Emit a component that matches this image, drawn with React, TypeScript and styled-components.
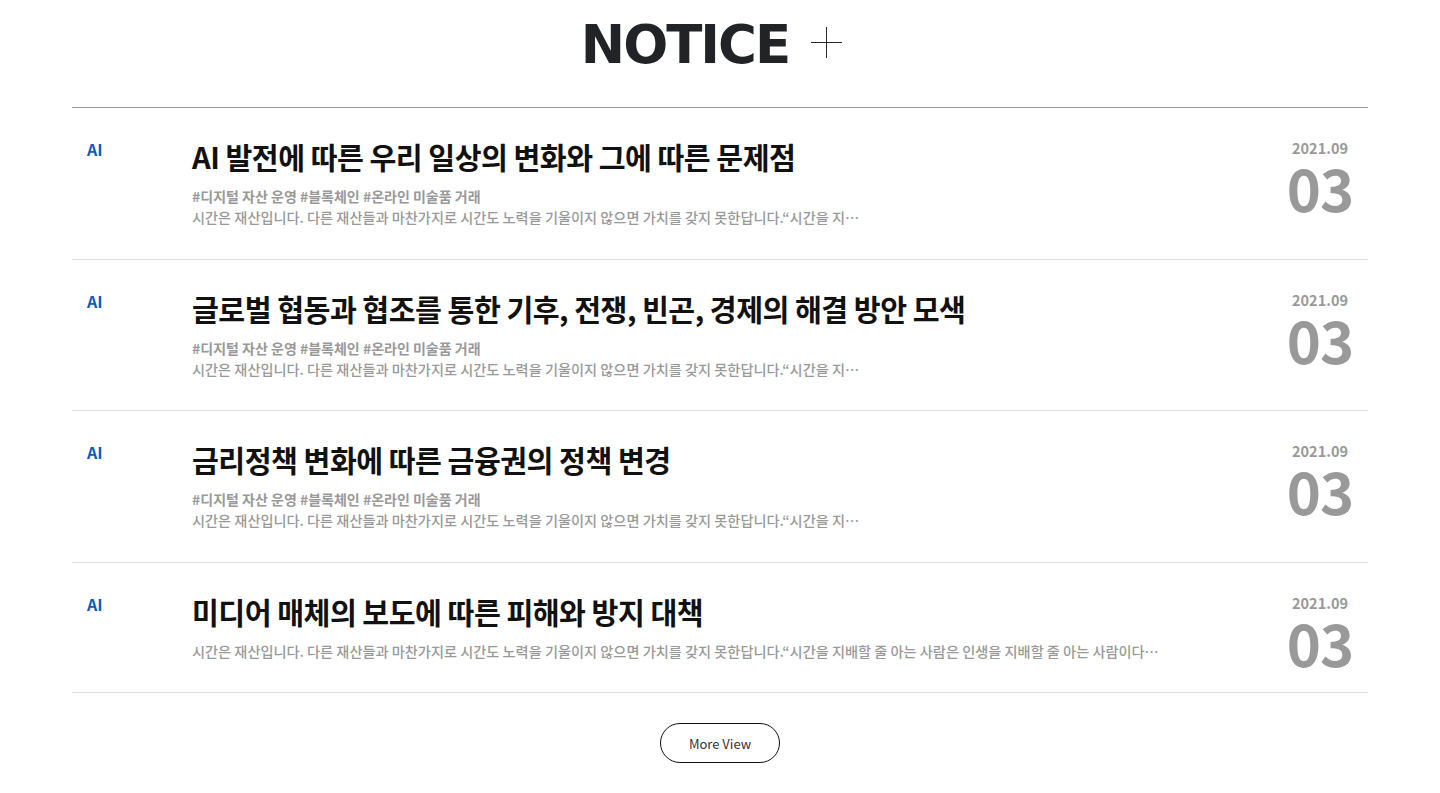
import * as React from 'react';
import styled, { createGlobalStyle } from 'styled-components';

type NoticeItem = {
  id: number;
  category: string;
  title: string;
  tags?: string;
  desc: string;
  descWidth?: number;
  month: string;
  day: string;
};

const DESC = '시간은 재산입니다. 다른 재산들과 마찬가지로 시간도 노력을 기울이지 않으면 가치를 갖지 못한답니다.“시간을 지배할 줄 아는 사람은 인생을 지배할 줄 아는 사람이다”';
const DESC_SHORT = '시간은 재산입니다. 다른 재산들과 마찬가지로 시간도 노력을 기울이지 않으면 가치를 갖지 못한답니다.“시간을 지배할 줄 아는 사람은 인생을 지배할 줄 아는 사람이다…';
const TAGS = '#디지털 자산 운영 #블록체인 #온라인 미술품 거래';

const notices: NoticeItem[] = [
  { id: 1, category: 'AI', title: 'AI 발전에 따른 우리 일상의 변화와 그에 따른 문제점', tags: TAGS, desc: DESC, descWidth: 670, month: '2021.09', day: '03' },
  { id: 2, category: 'AI', title: '글로벌 협동과 협조를 통한 기후, 전쟁, 빈곤, 경제의 해결 방안 모색', tags: TAGS, desc: DESC, descWidth: 670, month: '2021.09', day: '03' },
  { id: 3, category: 'AI', title: '금리정책 변화에 따른 금융권의 정책 변경', tags: TAGS, desc: DESC, descWidth: 670, month: '2021.09', day: '03' },
  { id: 4, category: 'AI', title: '미디어 매체의 보도에 따른 피해와 방지 대책', desc: DESC_SHORT, month: '2021.09', day: '03' },
];

export default function App() {
  return (
    <>
      <GlobalStyle />
      <StyledNotice>
        <Header>
          <HeaderTitle>NOTICE</HeaderTitle>
          <PlusIcon viewBox="0 0 32 32" aria-hidden>
            <path d="M16 0 V32 M0 16 H32" stroke="#222" strokeWidth="1" fill="none" />
          </PlusIcon>
        </Header>

        <List>
          {notices.map((n) => (
            <Row key={n.id}>
              <Category>{n.category}</Category>
              <Body>
                <Title>{n.title}</Title>
                <Meta>
                  {n.tags && <Tags>{n.tags}</Tags>}
                  <Desc $width={n.descWidth}>{n.desc}</Desc>
                </Meta>
              </Body>
              <DateBox>
                <Month>{n.month}</Month>
                <Day>{n.day}</Day>
              </DateBox>
            </Row>
          ))}
        </List>

        <Footer>
          <MoreButton type="button">More View</MoreButton>
        </Footer>
      </StyledNotice>
    </>
  );
}

const GlobalStyle = createGlobalStyle`
  * { box-sizing: border-box; }
  body {
    margin: 0;
    background: #fff;
    font-family: "Noto Sans CJK KR", "Noto Sans", sans-serif;
  }
`;

const StyledNotice = styled.section`
  width: 1296px;
  margin: 0 auto;
`;

const Header = styled.div`
  height: 107px;
  display: flex;
  align-items: center;
  justify-content: center;
  gap: 22px;
  padding-right: 17px;
  padding-bottom: 18px;
`;

const HeaderTitle = styled.h2`
  margin: 0;
  font-family: "DejaVu Sans", "Liberation Sans", sans-serif;
  font-size: 53px;
  font-weight: 700;
  letter-spacing: -2px;
  color: #222327;
  line-height: 1;
`;

const PlusIcon = styled.svg`
  width: 31px;
  height: 31px;
  margin-top: -4px;
`;

const List = styled.ul`
  list-style: none;
  margin: 0;
  padding: 0;
  border-top: 1px solid #999;
`;

const Row = styled.li`
  display: flex;
  align-items: flex-start;
  padding: 30px 16px 30.5px 15px;
  border-bottom: 1px solid #ddd;
`;

const Category = styled.span`
  width: 105px;
  flex-shrink: 0;
  font-size: 16px;
  line-height: 22px;
  font-weight: 700;
  color: #0a5cb8;
`;

const Body = styled.div`
  flex: 1;
  min-width: 0;
  display: flex;
  flex-direction: column;
  gap: 12px;
`;

const Title = styled.h3`
  margin: 0;
  font-size: 29.2px;
  line-height: 36px;
  font-weight: 700;
  color: #111;
  letter-spacing: -0.5px;
`;

const Meta = styled.div`
  display: flex;
  flex-direction: column;
`;

const Tags = styled.p`
  margin: 0;
  font-size: 14px;
  line-height: 21px;
  font-weight: 700;
  color: #999;
  white-space: nowrap;
`;

const Desc = styled.p<{ $width?: number }>`
  margin: 0;
  max-width: ${(p) => (p.$width ? `${p.$width}px` : 'none')};
  font-size: 14.2px;
  line-height: 21px;
  font-weight: 500;
  color: #999;
  white-space: nowrap;
  overflow: hidden;
  text-overflow: ellipsis;
`;

const DateBox = styled.div`
  display: flex;
  flex-direction: column;
  align-items: center;
  width: 64px;
  flex-shrink: 0;
`;

const Month = styled.span`
  font-size: 14.5px;
  line-height: 20px;
  font-weight: 700;
  color: #999;
`;

const Day = styled.span`
  margin-bottom: -10px;
  font-size: 58px;
  line-height: 58px;
  font-weight: 700;
  color: #999;
  letter-spacing: -1px;
`;

const Footer = styled.div`
  display: flex;
  justify-content: center;
  padding-top: 30px;
`;

const MoreButton = styled.button`
  width: 120px;
  height: 40px;
  border: 1px solid #111;
  border-radius: 20px;
  background: #fff;
  font-family: "Noto Sans CJK KR", "Noto Sans", sans-serif;
  font-size: 13px;
  color: #333;
  cursor: pointer;
`;
